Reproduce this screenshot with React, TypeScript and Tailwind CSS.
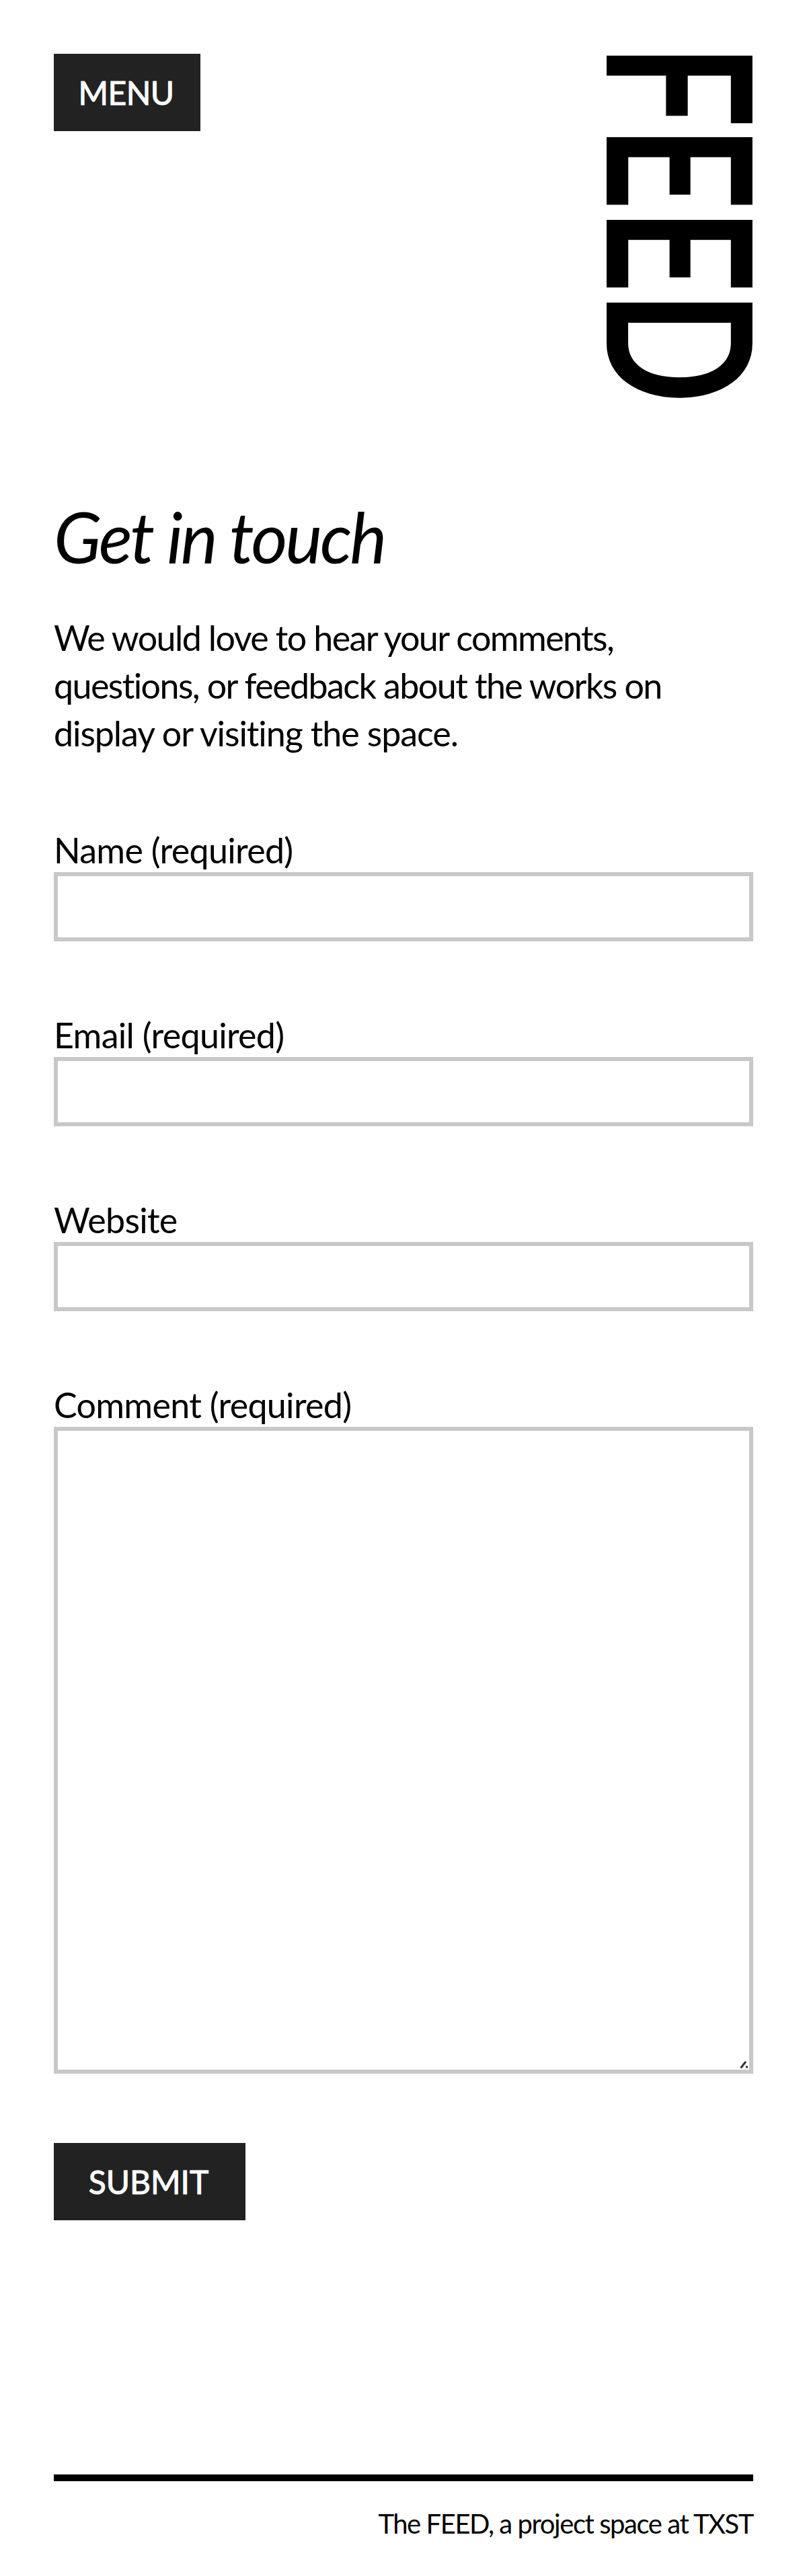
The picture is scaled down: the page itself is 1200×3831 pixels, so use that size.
import React from "react";

const font = "font-['Lato','Noto_Sans',sans-serif]";

function Field({ label, tall }: { label: string; tall?: boolean }) {
  return (
    <label className={tall ? "block mb-[103px]" : "block mb-[107px]"}>
      <span className="block text-[52px] leading-[65px] tracking-[-0.7px] text-black">{label}</span>
      {tall ? (
        <div className="relative">
          <textarea className="block w-full h-[962px] border-[6px] border-[#c8c8c8] bg-white resize-none" />
          <svg className="absolute right-[6px] bottom-[7px] w-[14px] h-[14px]" viewBox="0 0 14 14" aria-hidden="true">
            <path d="M1.5 12.5 L9 3" stroke="#333333" strokeWidth="3" fill="none" />
            <circle cx="10.5" cy="11" r="1.8" fill="#333333" />
          </svg>
        </div>
      ) : (
        <input type="text" className="block w-full h-[103px] border-[6px] border-[#c8c8c8] bg-white" />
      )}
    </label>
  );
}

export default function App() {
  return (
    <div className={`${font} bg-white w-[1200px] h-[3831px] px-20 pt-20 text-black overflow-hidden`}>
      <header className="flex justify-between items-start h-[658px]">
        <a className="flex items-center justify-center w-[218px] h-[115px] bg-[#222222] text-white text-[48px] [-webkit-text-stroke:1px_white] tracking-[-0.5px] pr-[3px]">
          MENU
        </a>
        <div className="w-[218px] h-[515px] overflow-visible">
          <div className="[writing-mode:vertical-rl] origin-top -mt-[15px] translate-x-[7px] scale-y-[0.735] tracking-[-5px] w-[218px] h-[652px] leading-[218px] text-[300px] font-bold whitespace-nowrap">
            FEED
          </div>
        </div>
      </header>
      <main>
        <h1 className="italic text-[104px] leading-[120px] tracking-[-3.2px] font-normal">Get in touch</h1>
        <p className="mt-[55px] text-[52px] leading-[71px] tracking-[-1.6px] max-w-[960px]">
          We would love to hear your comments, questions, or feedback about the works on{" "}
          <span className="tracking-[-1.1px]">display or visiting the space.</span>
        </p>
        <form className="mt-[106px]">
          <Field label="Name (required)" />
          <Field label="Email (required)" />
          <Field label="Website" />
          <Field label="Comment (required)" tall />
          <button
            type="button"
            className="flex items-center justify-center w-[285px] h-[115px] bg-[#222222] text-white text-[48px] [-webkit-text-stroke:1px_white] pr-[3px]"
          >
            SUBMIT
          </button>
        </form>
      </main>
      <footer className="mt-[378px] border-t-[10px] border-black pt-[38px] text-right text-[40px] leading-[50px] tracking-[-1.45px]">
        The FEED, a project space at TXST
      </footer>
    </div>
  );
}
